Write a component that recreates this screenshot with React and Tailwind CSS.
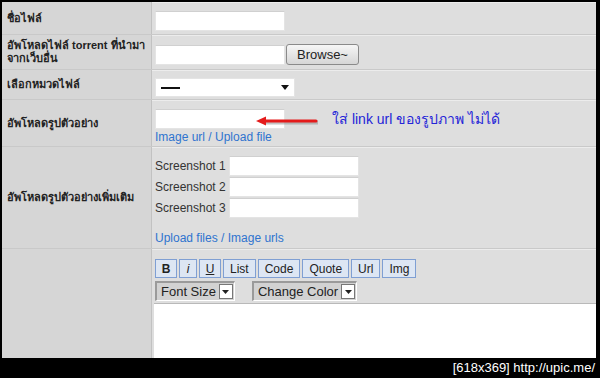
import React from "react";

const base = { fontFamily: "Tahoma, 'Liberation Sans', Arial, sans-serif" };

const Row = ({ h, label, children, last }) => (
  <div className={`flex ${h} ${last ? "" : "border-b border-[#c9c9c9]"}`}>
    <div className="w-[150px] shrink-0 bg-[#d6d6d6] border-r border-[#c2c2c2] flex items-center pl-[5px] text-[11px] font-bold text-[#222] leading-[13px] whitespace-nowrap">
      {label}
    </div>
    <div className="flex-1 bg-[#dedede] border-t border-[#ececec] pl-[3px]">{children}</div>
  </div>
);

const TextBox = ({ w = "w-[130px]" }) => (
  <div className={`${w} h-[20px] bg-white border border-[#e4e4e4] border-t-[#d0d0d0]`} />
);

const ToolBtn = ({ children, className = "" }) => (
  <div className={`h-[19px] px-[6px] flex items-center bg-[#dde6f3] border border-[#7f9fd3] text-[12px] text-[#222] ${className}`}>
    {children}
  </div>
);

const MiniSelect = ({ label }) => (
  <div className="h-[20px] flex items-center bg-[#d2d2d2] border-l-2 border-t-2 border-[#9a9a9a] border-r border-b border-r-white border-b-white pl-[4px] text-[13px] text-[#222] whitespace-nowrap">
    <span>{label}</span>
    <div className="ml-[3px] mr-[1px] w-[14px] h-[15px] bg-white border border-[#777] flex items-center justify-center">
      <svg width="7" height="4" viewBox="0 0 7 4"><path d="M0 0h7L3.5 4z" fill="#222" /></svg>
    </div>
  </div>
);

export default function App() {
  return (
    <div className="w-[600px] h-[378px] bg-black overflow-hidden" style={base}>
      <div className="ml-[2px] mt-[2px] w-[594px] h-[356px] flex flex-col">
        <Row h="h-[33px]" label="ชื่อไฟล์">
          <div className="pt-[8px]"><TextBox /></div>
        </Row>
        <Row h="h-[35px]" label={<span>อัพโหลดไฟล์ torrent ที่นำมา<br />จากเว็บอื่น</span>}>
          <div className="pt-[8px] flex items-center gap-[1px]">
            <TextBox />
            <div className="h-[21px] w-[73px] flex items-center justify-center rounded-[3px] border border-[#8a8a8a] bg-gradient-to-b from-[#f6f6f6] to-[#d6d6d6] text-[13px] text-[#222]">
              Browse~
            </div>
          </div>
        </Row>
        <Row h="h-[30px]" label="เลือกหมวดไฟล์">
          <div className="pt-[7px]">
            <div className="w-[140px] h-[19px] bg-white border border-[#e4e4e4] flex items-center justify-between px-[5px]">
              <div className="w-[19px] h-[2px] bg-[#111]" />
              <svg width="8" height="5" viewBox="0 0 8 5"><path d="M0 0h8L4 5z" fill="#111" /></svg>
            </div>
          </div>
        </Row>
        <Row h="h-[47px]" label="อัพโหลดรูปตัวอย่าง">
          <div className="pt-[8px] relative">
            <TextBox />
            <div className="text-[12px] text-[#2f74cf] leading-[14px] mt-[1px] whitespace-nowrap">Image url / Upload file</div>
            <svg className="absolute left-[101px] top-[14px]" width="64" height="14" viewBox="0 0 64 14">
              <path d="M8 7.5H62" stroke="#8a8a8a" strokeOpacity="0.5" strokeWidth="4" />
              <path d="M6 6H60" stroke="#e41b1b" strokeWidth="3" strokeLinecap="round" />
              <path d="M0 6L10 1.5V10.5Z" fill="#e41b1b" />
            </svg>
            <div className="absolute left-[177px] top-[8px] text-[14px] text-[#2424d8] whitespace-nowrap">ใส่ link url ของรูปภาพ ไม่ได้</div>
          </div>
        </Row>
        <Row h="h-[102px]" label="อัพโหลดรูปตัวอย่างเพิ่มเติม">
          <div className="pt-[8px] flex flex-col gap-[1px]">
            {[1, 2, 3].map((n) => (
              <div key={n} className="flex items-center">
                <span className="w-[74px] text-[12px] text-[#333] whitespace-nowrap">Screenshot {n}</span>
                <TextBox />
              </div>
            ))}
            <div className="mt-[12px] text-[12px] text-[#2f74cf] leading-[14px] whitespace-nowrap">Upload files / Image urls</div>
          </div>
        </Row>
        <Row h="h-[109px]" label="" last>
          <div className="h-full flex flex-col">
            <div className="pt-[9px] flex gap-[2px]">
              <ToolBtn className="font-bold w-[22px] justify-center px-0">B</ToolBtn>
              <ToolBtn className="italic w-[18px] justify-center px-0">i</ToolBtn>
              <ToolBtn className="underline w-[22px] justify-center px-0">U</ToolBtn>
              <ToolBtn>List</ToolBtn>
              <ToolBtn>Code</ToolBtn>
              <ToolBtn>Quote</ToolBtn>
              <ToolBtn>Url</ToolBtn>
              <ToolBtn>Img</ToolBtn>
            </div>
            <div className="mt-[3px] flex gap-[17px]">
              <MiniSelect label="Font Size" />
              <MiniSelect label="Change Color" />
            </div>
            <div className="mt-[2px] flex-1 bg-white border-t border-[#b9b9b9] -ml-[1px]" />
          </div>
        </Row>
      </div>
      <div className="h-[20px] flex items-center justify-end pr-[5px] text-white text-[13px] whitespace-nowrap" style={{ fontFamily: "'Liberation Sans Narrow', 'Liberation Sans', sans-serif" }}>
        [618x369] http://upic.me/
      </div>
    </div>
  );
}
